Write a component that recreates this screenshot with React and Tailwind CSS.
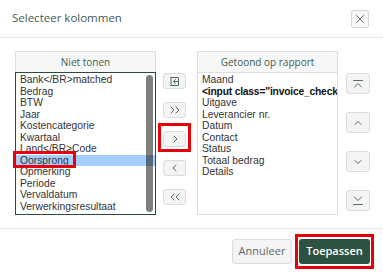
import React from "react";

const font = { fontFamily: '"Open Sans", "Liberation Sans", sans-serif' };
const listFont = { fontFamily: '"Liberation Sans", Arial, sans-serif' };

const leftItems = [
  "Bank</BR>matched",
  "Bedrag",
  "BTW",
  "Jaar",
  "Kostencategorie",
  "Kwartaal",
  "Land</BR>Code",
  "Oorsprong",
  "Opmerking",
  "Periode",
  "Vervaldatum",
  "Verwerkingsresultaat",
];

const rightItems = [
  "Maand",
  '<input class="invoice_check',
  "Uitgave",
  "Leverancier nr.",
  "Datum",
  "Contact",
  "Status",
  "Totaal bedrag",
  "Details",
];

function SmallBtn({ children }) {
  return (
    <div className="w-[23px] h-[16px] rounded-[3px] border border-[#dcdcdc] bg-[#f4f4f4] flex items-center justify-center text-[#4f6f60]">
      {children}
    </div>
  );
}

function BigBtn({ children }) {
  return (
    <div className="w-[24px] h-[21px] rounded-[3px] border border-[#dcdcdc] bg-[#f4f4f4] flex items-center justify-center text-[#4f6f60]">
      {children}
    </div>
  );
}

const stroke = { fill: "none", stroke: "currentColor", strokeWidth: 1, strokeLinecap: "round", strokeLinejoin: "round" };

export default function App() {
  return (
    <div className="w-[383px] h-[273px] bg-white relative overflow-hidden" style={font}>
      <div className="h-[38px] flex items-center justify-between pl-[12px] pr-[14px] border-b border-[#e6e6e6]">
        <div className="text-[11.5px] text-[#3f5d50] leading-none -mt-[2px]">Selecteer kolommen</div>
        <div className="w-[18px] h-[18px] rounded-[2px] border border-[#d6d6d6] bg-[#f7f7f7] flex items-center justify-center text-[#666]">
          <svg width="10" height="10" viewBox="0 0 10 10"><path d="M1.5 1.5L8.5 8.5M8.5 1.5L1.5 8.5" {...stroke} /></svg>
        </div>
      </div>

      <div className="flex pl-[15px] pt-[13px]">
        {/* Left list */}
        <div className="w-[141px] flex flex-col">
          <div className="h-[21px] border border-[#dedede] border-b-0 bg-[#f7f7f7] flex items-center justify-center text-[10px] text-[#3f5d50]">Niet tonen</div>
          <div className="relative h-[143px] border border-[#2c4b3d] pt-[1px] overflow-hidden" style={listFont}>
            {leftItems.map((t) => (
              <div
                key={t}
                className={`h-[11.55px] leading-[11.55px] pl-[4px] text-[10.3px] text-[#333] whitespace-nowrap ${t === "Oorsprong" ? "bg-[#a6cefa]" : ""}`}
              >
                {t}
              </div>
            ))}
            <div className="absolute right-[2px] top-[2px] bottom-[2px] w-[7px] rounded-full bg-black/50" />
          </div>
        </div>

        {/* Middle buttons */}
        <div className="ml-[7px] pt-[22px] flex flex-col gap-[13px]">
          <SmallBtn>
            <svg width="12" height="11" viewBox="0 0 12 11">
              <path d="M2 1.5h7.5v8H2" {...stroke} />
              <path d="M2 1.5v8" {...stroke} />
              <path d="M4.5 5.5h4M4.5 5.5l2-2M4.5 5.5l2 2" {...stroke} />
            </svg>
          </SmallBtn>
          <SmallBtn>
            <svg width="12" height="8" viewBox="0 0 12 8"><path d="M2 1l3 3-3 3M7 1l3 3-3 3" {...stroke} /></svg>
          </SmallBtn>
          <SmallBtn>
            <svg width="8" height="8" viewBox="0 0 8 8"><path d="M3 1l3 3-3 3" {...stroke} /></svg>
          </SmallBtn>
          <SmallBtn>
            <svg width="8" height="8" viewBox="0 0 8 8"><path d="M5 1L2 4l3 3" {...stroke} /></svg>
          </SmallBtn>
          <SmallBtn>
            <svg width="12" height="8" viewBox="0 0 12 8"><path d="M5 1L2 4l3 3M10 1L7 4l3 3" {...stroke} /></svg>
          </SmallBtn>
        </div>

        {/* Right list */}
        <div className="ml-[11px] w-[141px] flex flex-col">
          <div className="h-[21px] border border-[#dedede] border-b-0 bg-[#f7f7f7] flex items-center justify-center text-[10px] text-[#3f5d50]">Getoond op rapport</div>
          <div className="h-[143px] border border-[#dedede] pt-[1px] overflow-hidden" style={listFont}>
            {rightItems.map((t, i) => (
              <div
                key={t}
                className={`h-[11.55px] leading-[11.55px] pl-[4px] text-[10.3px] whitespace-nowrap ${i === 1 ? "font-bold text-[#111] tracking-[-0.2px]" : "text-[#333]"}`}
              >
                {t}
              </div>
            ))}
          </div>
        </div>

        {/* Right buttons */}
        <div className="ml-[8px] pt-[22px] flex flex-col gap-[18px]">
          <BigBtn>
            <svg width="12" height="10" viewBox="0 0 12 10"><path d="M1.5 1.5h9M2.5 8l3.5-3.5L9.5 8" {...stroke} /></svg>
          </BigBtn>
          <BigBtn>
            <svg width="10" height="8" viewBox="0 0 10 8"><path d="M2 5.5l3-3 3 3" {...stroke} /></svg>
          </BigBtn>
          <BigBtn>
            <svg width="10" height="8" viewBox="0 0 10 8"><path d="M2 2.5l3 3 3-3" {...stroke} /></svg>
          </BigBtn>
          <BigBtn>
            <svg width="12" height="12" viewBox="0 0 12 12"><path d="M2.5 2l3.5 3.5L9.5 2M1.5 9.5h9" {...stroke} /></svg>
          </BigBtn>
        </div>
      </div>

      {/* Footer */}
      <div className="mt-[13px] border-t border-[#e6e6e6] flex justify-end items-center gap-[7px] pr-[13px] pt-[10px]">
        <div className="w-[60px] h-[25px] rounded-[3px] border border-[#dcdcdc] bg-[#f4f4f4] flex items-center justify-center text-[11px] text-[#666]">Annuleer</div>
        <div className="w-[71px] h-[25px] rounded-[3px] bg-[#2d5242] flex items-center justify-center text-[11px] font-semibold text-white">Toepassen</div>
      </div>

      {/* Red highlight boxes */}
      <div className="absolute left-[13px] top-[151px] w-[63px] h-[17px] border-[3px] border-[#e8000b]" />
      <div className="absolute left-[158px] top-[123px] w-[33px] h-[29px] border-[3px] border-[#e8000b]" />
      <div className="absolute left-[295px] top-[234px] w-[79px] h-[35px] border-[3px] border-[#e8000b]" />
    </div>
  );
}
